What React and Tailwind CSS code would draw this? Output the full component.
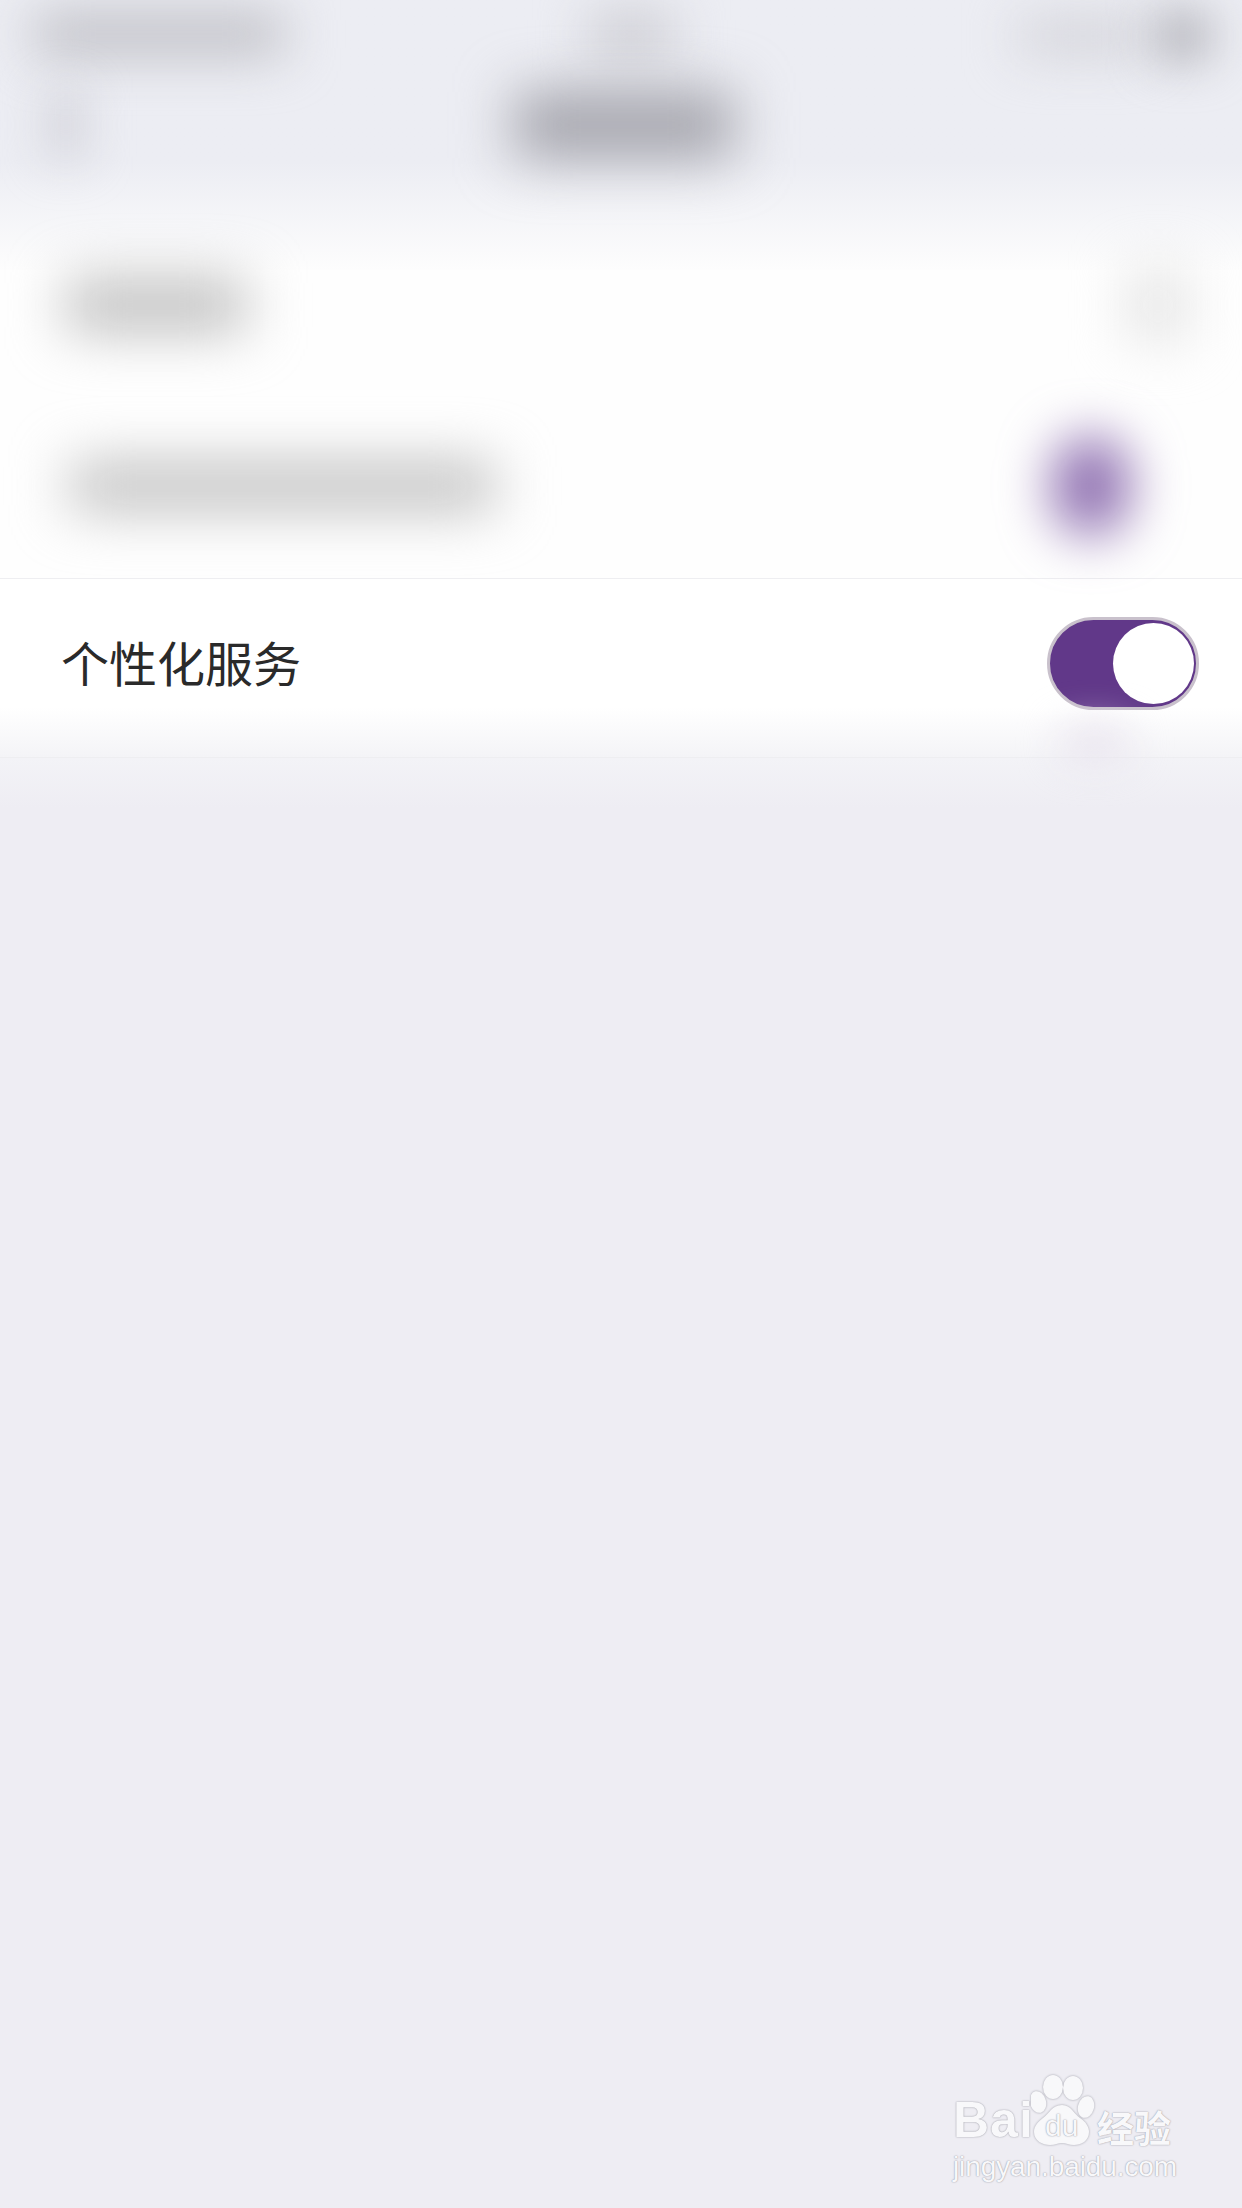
import React from "react";

const cjk = "font-['Noto_Sans_CJK_SC','Noto_Sans',sans-serif]";

function Switch() {
  return (
    <div className="flex h-[93px] w-[152px] items-center justify-end rounded-full border-[3px] border-[#c9c1cc] bg-[#613889] pr-[2px]">
      <div className="h-[81px] w-[81px] rounded-full bg-white" />
    </div>
  );
}

function Watermark() {
  const outline = "[text-shadow:0_0_1px_#9c9ca6,0_0_2px_#b4b4bc]";
  return (
    <div className="absolute left-[953px] top-[2075px] w-[230px] font-['Liberation_Sans',sans-serif] text-[#f8f8fa]">
      <div className="relative flex h-[70px] items-end">
        <span className={`text-[50px] leading-[50px] font-bold tracking-[1px] ${outline}`}>Bai</span>
        <svg className="absolute left-[78px] top-0 h-[72px] w-[64px] drop-shadow-[0_0_1px_#a0a0aa]" viewBox="0 0 64 72" fill="#f8f8fa">
          <ellipse cx="22" cy="12" rx="10" ry="12" />
          <ellipse cx="42" cy="13" rx="10" ry="12" />
          <ellipse cx="7" cy="27" rx="8" ry="11" transform="rotate(-15 7 27)" />
          <ellipse cx="55" cy="32" rx="8" ry="11" transform="rotate(15 55 32)" />
          <path d="M31 30c9 0 12 9 18 13 6 4 9 9 9 14 0 9-8 13-15 13-5 0-8-2-12-2s-7 2-12 2C12 70 3 66 3 57c0-6 4-10 9-14 6-4 9-13 19-13z" />
        </svg>
        <span className={`absolute left-[92px] top-[36px] text-[30px] leading-[30px] ${outline}`}>du</span>
        <span className={`absolute left-[144px] top-[32px] text-[37px] leading-[40px] font-bold ${cjk} ${outline}`}>经验</span>
      </div>
      <div className={`mt-[6px] text-[28px] leading-[32px] tracking-[-0.1px] whitespace-nowrap ${outline}`}>jingyan.baidu.com</div>
    </div>
  );
}

export default function App() {
  return (
    <div className={`relative h-[2208px] w-[1242px] overflow-hidden bg-[#eeedf3] ${cjk}`}>
      {/* frosted top bars */}
      <div className="h-[270px] bg-linear-to-b from-[#ecedf3] from-[60%] to-[#fdfdfd] px-[34px] pt-[14px]">
        <div className="flex items-start justify-between">
          <div className="h-[40px] w-[250px] bg-[#bbbbc1] blur-[26px]" />
          <div className="ml-[-40px] h-[40px] w-[85px] bg-[#c8c8ce] blur-[26px]" />
          <div className="flex items-center gap-[10px]">
            <div className="h-[34px] w-[130px] bg-[#d0d0d6] blur-[26px]" />
            <div className="h-[44px] w-[50px] bg-[#a6a6ad] blur-[24px]" />
          </div>
        </div>
        <div className="mt-[34px] flex items-center">
          <div className="ml-[18px] h-[64px] w-[28px] bg-[#c8c8d0] blur-[24px]" />
          <div className="ml-[434px] h-[66px] w-[220px] bg-[#a2a2aa] blur-[28px]" />
        </div>
      </div>

      {/* blurred rows */}
      <div className="flex h-[308px] flex-col bg-[#fefefe]">
        <div className="flex h-[70px] items-center justify-between pr-[56px] pl-[66px]">
          <div className="h-[50px] w-[180px] bg-[#bababa] blur-[28px]" />
          <div className="h-[70px] w-[56px] bg-[#e2e2e2] blur-[28px]" />
        </div>
        <div className="mt-[96px] flex h-[100px] items-center justify-between pr-[112px] pl-[70px]">
          <div className="h-[46px] w-[425px] bg-[#bcbcbc] blur-[28px]" />
          <div className="h-[100px] w-[78px] rounded-full bg-[#8e6fb0] blur-[26px]" />
        </div>
      </div>

      {/* the one sharp row */}
      <div className="flex h-[180px] items-center justify-between border-y border-[#eeeef1] bg-linear-to-b from-white from-[72%] to-[#f4f4f7] pr-[43px] pb-[10px] pl-[61px]">
        <span className="mb-[4px] text-[48px] leading-[64px] text-[#2a2a2a]">个性化服务</span>
        <Switch />
      </div>
      <div className="h-[50px] bg-linear-to-b from-[#f3f3f7] to-[#eeedf3]" />

      <div className="absolute left-[1060px] top-[728px] h-[30px] w-[70px] rounded-full bg-[#e6e0ec] blur-[20px]" />
      <Watermark />
    </div>
  );
}
